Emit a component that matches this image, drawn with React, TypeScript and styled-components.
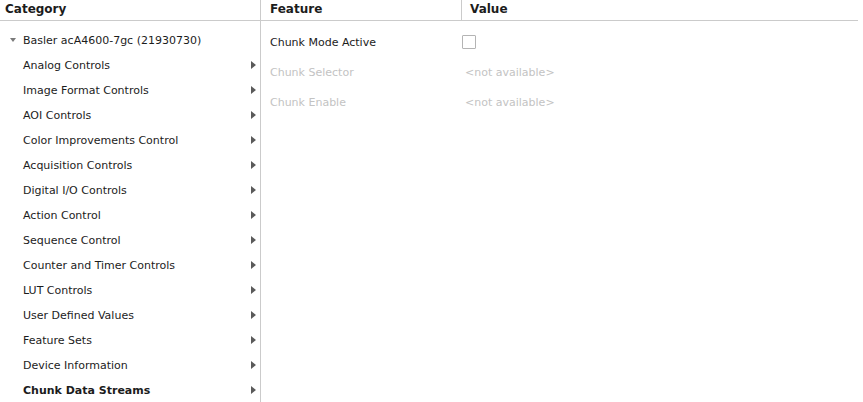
import React from "react";
import styled, { createGlobalStyle } from "styled-components";

const Global = createGlobalStyle`
  html, body { margin: 0; padding: 0; background: #fff; }
  body { font-family: "DejaVu Sans", "Liberation Sans", sans-serif; }
`;

const LINE = "#cbcbcb";

const Frame = styled.div`
  display: flex;
  width: 858px;
  height: 402px;
  background: #fff;
  color: #1c1c1c;
  font-size: 11px;
  overflow: hidden;
`;

const LeftPane = styled.div`
  width: 260px;
  flex: none;
  border-right: 1px solid ${LINE};
  display: flex;
  flex-direction: column;
`;

const RightPane = styled.div`
  flex: 1;
  display: flex;
  flex-direction: column;
`;

const HeaderRow = styled.div`
  display: flex;
  height: 20px;
  border-bottom: 1px solid ${LINE};
  flex: none;
`;

const HeaderCell = styled.div<{ $w?: number; $pad: number; $divider?: boolean }>`
  ${(p) => (p.$w ? `width: ${p.$w}px; flex: none;` : "flex: 1;")}
  padding-left: ${(p) => p.$pad}px;
  box-sizing: border-box;
  font-weight: bold;
  font-size: 12px;
  line-height: 18px;
  ${(p) => (p.$divider ? `border-right: 1px solid ${LINE};` : "")}
`;

const List = styled.div<{ $top: number }>`
  padding-top: ${(p) => p.$top}px;
  display: flex;
  flex-direction: column;
`;

const TreeRow = styled.div<{ $indent: number; $bold?: boolean }>`
  height: 25px;
  line-height: 25px;
  display: flex;
  align-items: center;
  padding-left: ${(p) => p.$indent}px;
  padding-right: 4px;
  font-weight: ${(p) => (p.$bold ? "bold" : "normal")};
  white-space: nowrap;
`;

const Label = styled.span`
  flex: 1;
`;

const DownArrow = styled.span`
  flex: none;
  width: 0;
  height: 0;
  border-left: 3.5px solid transparent;
  border-right: 3.5px solid transparent;
  border-top: 4px solid #7a7a7a;
  margin-right: 6px;
  margin-top: -1px;
`;

const RootLabel = styled(Label)`
  padding-left: 1px;
`;

const RightArrow = styled.span`
  flex: none;
  width: 0;
  height: 0;
  border-top: 4px solid transparent;
  border-bottom: 4px solid transparent;
  border-left: 5px solid #5a5a5a;
  margin-top: -1px;
`;

const FeatureRow = styled.div`
  display: flex;
  height: 30px;
  align-items: center;
`;

const FeatureName = styled.div<{ $disabled?: boolean }>`
  width: 201px;
  flex: none;
  padding-left: 9px;
  box-sizing: border-box;
  color: ${(p) => (p.$disabled ? "#c3c3c3" : "#1c1c1c")};
`;

const FeatureValue = styled.div<{ $disabled?: boolean }>`
  flex: 1;
  padding-left: 3px;
  color: ${(p) => (p.$disabled ? "#c3c3c3" : "#1c1c1c")};
  display: flex;
  align-items: center;
`;

const CheckBox = styled.span`
  width: 14px;
  height: 14px;
  box-sizing: border-box;
  border: 1px solid #b4b4b4;
  border-radius: 1px;
  background: #fff;
  margin-left: -3px;
`;

const categories = [
  "Analog Controls",
  "Image Format Controls",
  "AOI Controls",
  "Color Improvements Control",
  "Acquisition Controls",
  "Digital I/O Controls",
  "Action Control",
  "Sequence Control",
  "Counter and Timer Controls",
  "LUT Controls",
  "User Defined Values",
  "Feature Sets",
  "Device Information",
  "Chunk Data Streams",
];

export default function App() {
  return (
    <>
      <Global />
      <Frame>
        <LeftPane>
          <HeaderRow>
            <HeaderCell $pad={5}>Category</HeaderCell>
          </HeaderRow>
          <List $top={7}>
            <TreeRow $indent={10}>
              <DownArrow />
              <RootLabel>Basler acA4600-7gc (21930730)</RootLabel>
            </TreeRow>
            {categories.map((c, i) => (
              <TreeRow key={c} $indent={23} $bold={i === categories.length - 1}>
                <Label>{c}</Label>
                <RightArrow />
              </TreeRow>
            ))}
          </List>
        </LeftPane>
        <RightPane>
          <HeaderRow>
            <HeaderCell $w={201} $pad={9} $divider>
              Feature
            </HeaderCell>
            <HeaderCell $pad={8}>Value</HeaderCell>
          </HeaderRow>
          <List $top={6}>
            <FeatureRow>
              <FeatureName>Chunk Mode Active</FeatureName>
              <FeatureValue>
                <CheckBox />
              </FeatureValue>
            </FeatureRow>
            <FeatureRow>
              <FeatureName $disabled>Chunk Selector</FeatureName>
              <FeatureValue $disabled>&lt;not available&gt;</FeatureValue>
            </FeatureRow>
            <FeatureRow>
              <FeatureName $disabled>Chunk Enable</FeatureName>
              <FeatureValue $disabled>&lt;not available&gt;</FeatureValue>
            </FeatureRow>
          </List>
        </RightPane>
      </Frame>
    </>
  );
}
